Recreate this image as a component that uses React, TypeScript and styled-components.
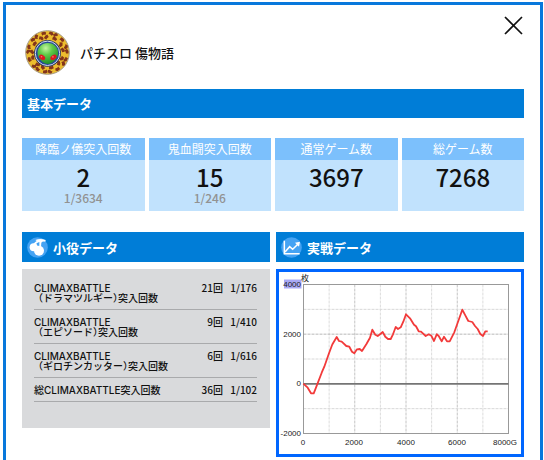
import React from 'react';
import styled, { createGlobalStyle } from 'styled-components';

const GlobalStyle = createGlobalStyle`
  * { box-sizing: border-box; }
  body {
    margin: 0;
    background: #fff;
    color: #111;
    font-family: "Noto Sans CJK JP", sans-serif;
  }
`;

const Frame = styled.main`
  margin: 2px 1px 0 3px;
  padding: 0 16px;
  min-height: calc(100vh - 2px);
  border: 3px solid #0878dc;
  border-bottom: 0;
`;

const Header = styled.header`
  display: flex;
  justify-content: space-between;
  align-items: flex-start;
  height: 84px;
`;

const Machine = styled.div`
  display: flex;
  align-items: center;
  gap: 10px;
  padding: 25px 0 0 3px;
`;

const MachineName = styled.h1`
  margin: 0;
  font-size: 13px;
  line-height: 20px;
  font-weight: 500;
`;

const CloseButton = styled.button`
  display: flex;
  margin-top: 11px;
  padding: 0;
  border: 0;
  background: none;
  cursor: pointer;
`;

const Bar = styled.h2<{ $tall?: boolean }>`
  display: flex;
  align-items: center;
  gap: 5px;
  margin: 0;
  padding: 0 5px;
  height: ${(p) => (p.$tall ? 30 : 29)}px;
  background: #007dd7;
  color: #fff;
  font-size: 13px;
  font-weight: 700;
`;

const Cards = styled.div`
  display: grid;
  grid-template-columns: repeat(4, 1fr);
  gap: 4px;
  margin: 20px 0 21px;
`;

const Card = styled.section`
  height: 73px;
  background: #c1e2fd;
  text-align: center;
`;

const CardTitle = styled.h3`
  margin: 0;
  background: #7cc0fc;
  color: #fff;
  font-size: 12px;
  line-height: 22px;
  font-weight: 400;
`;

const CardValue = styled.div`
  padding-top: 3px;
  font-size: 24px;
  line-height: 28px;
  font-weight: 500;
`;

const CardRate = styled.div`
  color: #929292;
  font-size: 12px;
  line-height: 14px;
  font-weight: 500;
`;

const Columns = styled.div`
  display: grid;
  grid-template-columns: 1fr 1fr;
  align-items: start;
  gap: 6px;
`;

const RolePanel = styled.div`
  margin-top: 7px;
  padding: 7px 13px 26px 12px;
  background: #d9dadc;
`;

const RoleTable = styled.table`
  width: 100%;
  border-collapse: collapse;
  font-size: 10px;
  line-height: 10px;
  font-weight: 500;
`;

const RoleRow = styled.tr`
  border-bottom: 1px solid #a9aaac;
`;

const RoleName = styled.th`
  padding: 7px 0 6px;
  text-align: left;
  font-family: Inter, "Noto Sans CJK JP", sans-serif;
  font-weight: 500;
  white-space: nowrap;
`;

const RoleDetail = styled.span`
  display: block;
  padding-left: 4px;
  font-family: "Noto Sans CJK JP", sans-serif;
  font-feature-settings: "halt";
`;

const RoleCell = styled.td<{ $width: number }>`
  width: ${(p) => p.$width}px;
  padding: 7px 0 6px;
  text-align: right;
  vertical-align: top;
  white-space: nowrap;
`;

const Chart = styled.div`
  margin-top: 7px;
  border: 3px solid #0066ff;

  svg {
    display: block;
    width: 100%;
    height: auto;
  }
`;

const cards = [
  { title: '降臨ノ儀突入回数', value: '2', rate: '1/3634' },
  { title: '鬼血闘突入回数', value: '15', rate: '1/246' },
  { title: '通常ゲーム数', value: '3697' },
  { title: '総ゲーム数', value: '7268' },
];

const roles = [
  { name: 'CLIMAXBATTLE', sub: '（ドラマツルギー）突入回数', count: '21回', rate: '1/176' },
  { name: 'CLIMAXBATTLE', sub: '（エピソード）突入回数', count: '9回', rate: '1/410' },
  { name: 'CLIMAXBATTLE', sub: '（ギロチンカッター）突入回数', count: '6回', rate: '1/616' },
  { name: '総CLIMAXBATTLE突入回数', count: '36回', rate: '1/102' },
];

const curve =
  '24.3,111.7 28.7,115.7 32,121.3 34.7,121.3 36.3,117.3 42.7,100.7 45.3,94.7 50,81.3 53.3,72.5 57.7,65 60,69 62.7,69.7 67.3,74 70.3,74.7 73,79.7 75.3,81.3 78,77.3 80.7,77 83,79 85.7,74.7 87.3,72.3 91,65.7 93.3,57.7 96.3,62.7 98.7,64 101,62.3 103.7,60 106.3,64.7 109,67 111.7,67 114,62.3 116.7,55 119,57 121.7,55.3 124.3,49.7 127,42.3 131,46.3 135,52.7 137,54.3 139.7,59.3 142,59.7 146.7,64 149.7,62.3 152.3,63.7 155,69 157.7,62.3 159.7,64 162.7,69.3 165,64.7 168,69.3 170.7,69.3 175.3,60.3 183.3,37.7 186.3,43.3 189.3,49 193.3,50 196,54 198.7,57 201.3,62 204,64 206.3,59.3 208.7,59.3';

const LEFT = 24.5;
const RIGHT = 229.5;
const TOP = 12.5;
const BOTTOM = 161.5;
const xOf = (games: number) => LEFT + ((RIGHT - LEFT) * games) / 8000;
const yOf = (coins: number) => TOP + ((BOTTOM - TOP) * (4000 - coins)) / 6000;

function CoinChart() {
  return (
    <svg viewBox="0 0 242 182" role="img" aria-label="実戦データ">
      <rect x="5" y="7.5" width="17.5" height="9" fill="#a9a9f5" />
      {[1, 2, 3, 4, 5, 6, 7].map((k) => (
        <line key={k} x1={xOf(k * 1000)} x2={xOf(k * 1000)} y1={TOP} y2={BOTTOM}
          stroke={k % 2 ? '#dcdcdc' : '#c4c4c4'} strokeDasharray="3 1" />
      ))}
      {[3000, 2000, 1000, -1000].map((v) => (
        <line key={v} x1={LEFT} x2={RIGHT} y1={yOf(v)} y2={yOf(v)}
          stroke={v === 2000 ? '#b8b8b8' : '#d8d8d8'} strokeDasharray="3 1" />
      ))}
      <rect x={LEFT} y={TOP} width={RIGHT - LEFT} height={BOTTOM - TOP} fill="none" stroke="#999" />
      <line x1={LEFT} x2={RIGHT} y1={yOf(0)} y2={yOf(0)} stroke="#747474" strokeWidth="1.6" />
      <polyline points={curve} fill="none" stroke="#f23a3a" strokeWidth="1.8" strokeLinejoin="round" />
      <g fontFamily='"Liberation Sans", sans-serif' fontSize="8" fill="#222">
        <text x="22" y="9" fontFamily='"Noto Sans CJK JP", sans-serif'>枚</text>
        <g textAnchor="end">
          <text x="22" y="15">4000</text>
          <text x="22" y="65">2000</text>
          <text x="22" y="114">0</text>
          <text x="22" y="164">-2000</text>
        </g>
        <g textAnchor="middle">
          <text x="24" y="173">0</text>
          <text x="75" y="173">2000</text>
          <text x="127" y="173">4000</text>
          <text x="178" y="173">6000</text>
          <text x="226" y="173">8000G</text>
        </g>
      </g>
    </svg>
  );
}

function AlienEmblem() {
  const patches: React.ReactNode[] = [];
  [15.4, 19.3].forEach((radius, ring) => {
    const count = 13 + ring * 5;
    for (let i = 0; i < count; i++) {
      const wobble = ((i * 7 + ring * 3) % 5) - 2;
      const angle = (i * 360) / count + ring * 9 + wobble * 2;
      patches.push(
        <path key={`${ring}-${i}`}
          transform={`rotate(${angle}) translate(0 ${-radius}) rotate(${wobble * 22})`}
          d={`M-2.4 -1.3 L0.6 -1.9 L2.5 ${-0.6 + wobble * 0.2} L1.6 1.6 L-0.6 1.2 L-2 1.8 Z`} />,
      );
    }
  });
  return (
    <svg width="45" height="45" viewBox="-22.5 -22.5 45 45" aria-hidden="true">
      <defs>
        <radialGradient id="skin" cx="0.4" cy="0.25" r="0.8">
          <stop offset="0" stopColor="#c4f5a0" />
          <stop offset="0.4" stopColor="#5fca48" />
          <stop offset="1" stopColor="#1b8a26" />
        </radialGradient>
      </defs>
      <circle r="21.8" fill="#edbd2e" />
      <g fill="#84351a">{patches}</g>
      <circle r="21.8" fill="none" stroke="#a59a88" strokeWidth="1" />
      <circle cy="0.8" r="13.4" fill="#28345a" />
      <circle cy="0.8" r="12.2" fill="#25479a" stroke="#d5dded" strokeWidth="1" />
      <path d="M0.3 -9.5C6.5 -9.5 10.6 -5 10.6 0.5C10.6 6 5 11.4 0.3 11.4S-10 6 -10 0.5C-10 -5 -6 -9.5 0.3 -9.5Z" fill="url(#skin)" />
      <ellipse cx="-5.4" cy="4.9" rx="3.4" ry="2.3" transform="rotate(35 -5.4 4.9)" fill="#dc1820" />
      <ellipse cx="6" cy="4.9" rx="3.4" ry="2.3" transform="rotate(-35 6 4.9)" fill="#dc1820" />
      <circle cx="-6" cy="4.2" r="0.8" fill="#ff7770" />
      <circle cx="5.4" cy="4.4" r="0.8" fill="#ff7770" />
    </svg>
  );
}

function CherryIcon() {
  return (
    <svg width="21" height="21" viewBox="0 0 63 63" aria-hidden="true">
      <circle cx="31.5" cy="31.5" r="31" fill="#45a3f3" />
      <g fill="#fff">
        <circle cx="20" cy="31" r="12" />
        <circle cx="36" cy="41" r="15" />
        <path d="M25 9Q40 3 56 9L55 14Q46 12 43 17L42 30H37V15Q30 17 24 24L19 21Q24 15 29 12Z" />
      </g>
    </svg>
  );
}

function TrendIcon() {
  return (
    <svg width="21" height="21" viewBox="0 0 63 63" aria-hidden="true">
      <circle cx="31.5" cy="31.5" r="31" fill="#45a3f3" />
      <g fill="none" stroke="#fff" strokeWidth="4.5">
        <path d="M10 11V50H56" />
        <path d="M12 45L26 29L35 37L52 20" />
      </g>
      <path d="M42 17L57 14L54 29Z" fill="#fff" />
    </svg>
  );
}

export default function App() {
  return (
    <>
      <GlobalStyle />
      <Frame lang="ja">
        <Header>
          <Machine>
            <AlienEmblem />
            <MachineName>パチスロ 傷物語</MachineName>
          </Machine>
          <CloseButton type="button" aria-label="閉じる">
            <svg width="20" height="20" viewBox="0 0 20 20" aria-hidden="true">
              <path d="M1 1L18 18M18 1L1 18" stroke="#111" strokeWidth="1.7" />
            </svg>
          </CloseButton>
        </Header>
        <Bar>基本データ</Bar>
        <Cards>
          {cards.map((c) => (
            <Card key={c.title}>
              <CardTitle>{c.title}</CardTitle>
              <CardValue>{c.value}</CardValue>
              {c.rate && <CardRate>{c.rate}</CardRate>}
            </Card>
          ))}
        </Cards>
        <Columns>
          <section>
            <Bar $tall><CherryIcon />小役データ</Bar>
            <RolePanel>
              <RoleTable>
                <tbody>
                  {roles.map((r) => (
                    <RoleRow key={r.rate}>
                      <RoleName scope="row">
                        {r.name}
                        {r.sub && <RoleDetail>{r.sub}</RoleDetail>}
                      </RoleName>
                      <RoleCell $width={30}>{r.count}</RoleCell>
                      <RoleCell $width={34}>{r.rate}</RoleCell>
                    </RoleRow>
                  ))}
                </tbody>
              </RoleTable>
            </RolePanel>
          </section>
          <section>
            <Bar $tall><TrendIcon />実戦データ</Bar>
            <Chart><CoinChart /></Chart>
          </section>
        </Columns>
      </Frame>
    </>
  );
}
